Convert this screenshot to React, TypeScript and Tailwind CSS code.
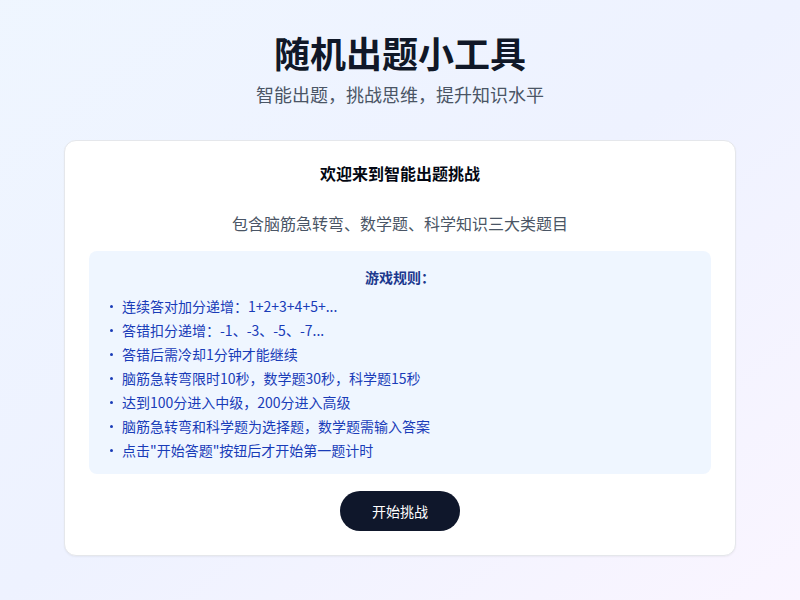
import React from "react";

const rules = [
  "连续答对加分递增：1+2+3+4+5+...",
  "答错扣分递增：-1、-3、-5、-7...",
  "答错后需冷却1分钟才能继续",
  "脑筋急转弯限时10秒，数学题30秒，科学题15秒",
  "达到100分进入中级，200分进入高级",
  "脑筋急转弯和科学题为选择题，数学题需输入答案",
  "点击\"开始答题\"按钮后才开始第一题计时",
];

export default function App() {
  return (
    <div className="min-h-screen bg-linear-to-br from-blue-50 via-indigo-50 to-purple-50 font-['Noto_Sans_CJK_SC',sans-serif] pt-8 px-4">
      <div className="text-center mb-8">
        <h1 className="text-4xl font-bold text-gray-900 mb-2">随机出题小工具</h1>
        <p className="text-lg text-gray-600">智能出题，挑战思维，提升知识水平</p>
      </div>
      <div className="max-w-2xl mx-auto bg-white rounded-xl border border-gray-200 shadow-xs pt-6 pb-6 px-6">
        <h2 className="text-center text-base font-semibold leading-none text-gray-950">欢迎来到智能出题挑战</h2>
        <p className="mt-[30px] text-center text-base leading-6 text-gray-600">包含脑筋急转弯、数学题、科学知识三大类题目</p>
        <div className="mt-4 bg-blue-50 rounded-lg px-4 pt-4 pb-[14px]">
          <h3 className="text-center text-sm font-semibold leading-5 text-blue-900 mb-[9px]">游戏规则：</h3>
          <ul className="space-y-1 text-sm leading-5 text-blue-800">
            {rules.map((r) => (
              <li key={r} className="flex items-center">
                <span className="inline-block w-[3px] h-[3px] rounded-full bg-current ml-[5px] mr-[9px] shrink-0" />
                <span>{r}</span>
              </li>
            ))}
          </ul>
        </div>
        <div className="mt-[17px] flex justify-center">
          <button className="h-10 px-8 rounded-full bg-slate-900 text-white text-sm">开始挑战</button>
        </div>
      </div>
    </div>
  );
}
